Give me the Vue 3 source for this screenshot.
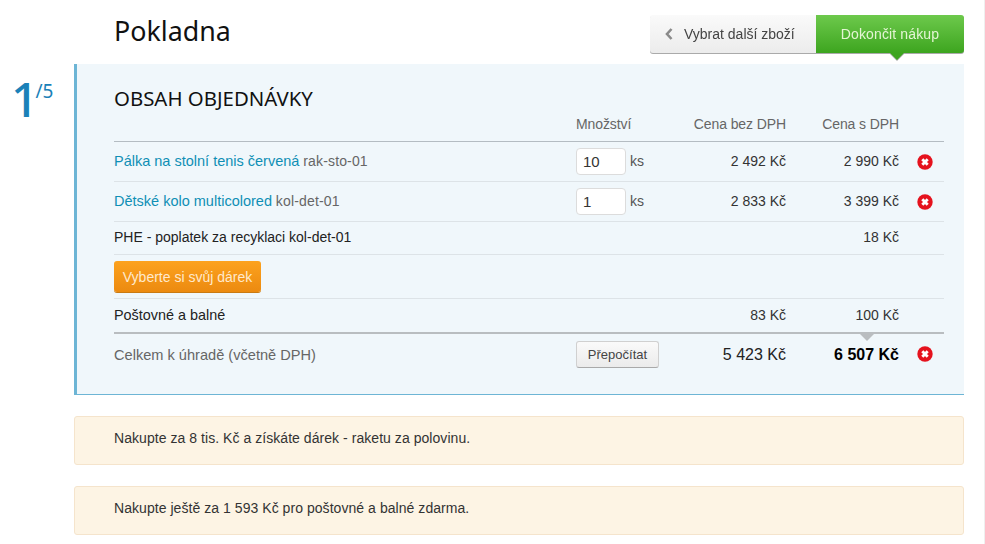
<script setup>
const items = [
  { name: 'Pálka na stolní tenis červená', code: 'rak-sto-01', qty: 10, net: '2 492 Kč', gross: '2 990 Kč' },
  { name: 'Dětské kolo multicolored', code: 'kol-det-01', qty: 1, net: '2 833 Kč', gross: '3 399 Kč' },
]
const notices = [
  'Nakupte za 8 tis. Kč a získáte dárek - raketu za polovinu.',
  'Nakupte ještě za 1 593 Kč pro poštovné a balné zdarma.',
]
</script>

<template>
  <div class="page">
    <header class="top">
      <h1 class="title">Pokladna</h1>
      <div class="actions">
        <a class="back">
          <svg class="chev" width="8" height="12" viewBox="0 0 8 12"><path d="M6.500 1 2 6l4.500 5" fill="none" stroke="#8a8a8a" stroke-width="2.600" /></svg>
          Vybrat další zboží
        </a>
        <a class="finish">Dokončit nákup</a>
      </div>
    </header>

    <section class="step">
      <div class="num"><span class="cur">1</span><span class="of">/5</span></div>
      <div class="panel">
        <h2 class="h2">OBSAH OBJEDNÁVKY</h2>
        <div class="row head">
          <div class="c-name"></div>
          <div class="c-qty">Množství</div>
          <div class="c-net">Cena bez DPH</div>
          <div class="c-gross">Cena s DPH</div>
          <div class="c-x"></div>
        </div>
        <div v-for="it in items" :key="it.code" class="row item">
          <div class="c-name"><a class="link">{{ it.name }}</a> <span class="code">{{ it.code }}</span></div>
          <div class="c-qty"><input class="qty" :value="it.qty" /><span class="ks">ks</span></div>
          <div class="c-net">{{ it.net }}</div>
          <div class="c-gross">{{ it.gross }}</div>
          <div class="c-x">
            <svg class="del" width="16" height="16" viewBox="0 0 16 16"><circle cx="8" cy="8" r="7.700" fill="#e5121d" /><path d="M5.300 5.300l5.400 5.400M10.700 5.300l-5.400 5.400" stroke="#fff" stroke-width="2.900" /></svg>
          </div>
        </div>
        <div class="row fee">
          <div class="c-name dark">PHE - poplatek za recyklaci kol-det-01</div>
          <div class="c-qty"></div>
          <div class="c-net"></div>
          <div class="c-gross">18 Kč</div>
          <div class="c-x"></div>
        </div>
        <div class="row gift"><button class="gift-btn">Vyberte si svůj dárek</button></div>
        <div class="row ship">
          <div class="c-name dark ship-label">Poštovné a balné</div>
          <div class="c-qty"></div>
          <div class="c-net">83 Kč</div>
          <div class="c-gross">100 Kč</div>
          <div class="c-x"></div>
        </div>
        <div class="row total">
          <div class="c-name label">Celkem k úhradě (včetně DPH)</div>
          <div class="c-qty"><button class="recalc">Přepočítat</button></div>
          <div class="c-net sum">5 423 Kč</div>
          <div class="c-gross sum strong">6 507 Kč</div>
          <div class="c-x">
            <svg class="del" width="16" height="16" viewBox="0 0 16 16"><circle cx="8" cy="8" r="7.700" fill="#e5121d" /><path d="M5.300 5.300l5.400 5.400M10.700 5.300l-5.400 5.400" stroke="#fff" stroke-width="2.900" /></svg>
          </div>
        </div>
      </div>
    </section>

    <p v-for="n in notices" :key="n" class="notice">{{ n }}</p>
  </div>
</template>

<style scoped>
.page {
  width: 985px;
  height: 544px;
  overflow: hidden;
  box-sizing: border-box;
  padding-right: 20px;
  font-family: "Liberation Sans", Arial, sans-serif;
  font-size: 14px;
  color: #333;
  background: #fff;
  border-right: 1px solid #efefef;
}
.top {
  display: flex;
  justify-content: space-between;
  padding: 15px 0 0 114px;
  height: 64px;
  box-sizing: border-box;
}
.title {
  margin: 0;
  font: 400 26.800px/32px "Noto Sans", sans-serif;
  color: #111;
}
.actions {
  display: flex;
  height: 38px;
  position: relative;
  filter: drop-shadow(0 1px 0 #aaa);
  font-size: 14px;
}
.back {
  width: 166px;
  box-sizing: border-box;
  padding-left: 15px;
  display: flex;
  align-items: center;
  gap: 11px;
  color: #444;
  border-radius: 3px 0 0 3px;
  background: linear-gradient(#fafafa, #ececec);
}
.finish {
  width: 148px;
  display: flex;
  align-items: center;
  justify-content: center;
  color: #e4f5d4;
  letter-spacing: 0.13px;
  border-radius: 0 3px 3px 0;
  background: linear-gradient(#6dc94c, #3da51f);
  position: relative;
}
.finish::after {
  content: "";
  position: absolute;
  left: 74px;
  top: 100%;
  border: 7px solid transparent;
  border-bottom-width: 0;
  border-top-color: #3da51f;
}
.step {
  display: flex;
}
.num {
  width: 74px;
  color: #1b81b8;
  font-family: "Noto Sans", sans-serif;
  padding: 0 0 0 11px;
  box-sizing: border-box;
  display: flex;
  align-items: flex-start;
}
.cur {
  font-size: 48px;
  font-weight: 500;
  line-height: 70px;
  letter-spacing: -4px;
}
.of {
  font-size: 19px;
  line-height: 28px;
  margin: 13px 0 0 1px;
}
.panel {
  width: 890px;
  height: 331px;
  flex: none;
  box-sizing: border-box;
  padding: 22px 20px 0 37px;
  background: #f0f7fb;
  border-left: 3px solid #6db5d5;
  border-bottom: 1px solid #6db5d5;
}
.h2 {
  margin: 0;
  font: 400 20.400px/24px "Noto Sans", sans-serif;
  color: #111;
  height: 28px;
}
.row {
  display: flex;
  align-items: center;
  border-bottom: 1px solid #dde3e7;
  box-sizing: border-box;
}
.c-name { width: 462px; }
.c-qty { width: 90px; display: flex; align-items: center; }
.c-net { width: 120px; text-align: right; }
.c-gross { width: 113px; text-align: right; }
.c-x { width: 45px; display: flex; justify-content: flex-end; padding-right: 11px; box-sizing: border-box; }
.head {
  height: 28px;
  color: #666;
  align-items: flex-start;
  padding-top: 2px;
  border-bottom-color: #b4bcc2;
  letter-spacing: -0.1px;
}
.item { height: 40px; }
.item .c-name, .item .c-net, .item .c-gross, .fee > div { padding-bottom: 2px; }
.ship > div { padding-bottom: 1px; }
.total .c-name, .total .c-net, .total .c-gross { padding-top: 2px; }
.link { color: #0f8fb5; font-size: 14.500px; }
.code { color: #666; letter-spacing: 0.15px; }
.qty {
  width: 50px;
  height: 27px;
  box-sizing: border-box;
  border: 1px solid #dcdcdc;
  border-radius: 4px;
  background: #fff;
  padding: 0 6px;
  font: 15px "Liberation Sans", Arial, sans-serif;
  color: #333;
  outline: 0;
  margin-right: 4px;
}
.ks { color: #555; position: relative; top: -1px; }
.fee { height: 33px; }
.dark { color: #222; }
.ship-label { font-size: 14.400px; }
.gift { height: 44px; }
.gift-btn {
  height: 31px;
  width: 147px;
  padding: 0;
  border: 0;
  border-radius: 3px;
  background: linear-gradient(#fca21e, #ec8a10);
  box-shadow: 0 1px 0 #c97a12;
  color: #ffe9cc;
  font: 14px "Liberation Sans", Arial, sans-serif;
}
.ship {
  height: 35px;
  border-bottom: 2px solid #b9bdc0;
}
.total {
  height: 40px;
  border-bottom: 0;
  position: relative;
}
.total::before {
  content: "";
  position: absolute;
  left: 746px;
  top: 0;
  border: 7px solid transparent;
  border-bottom-width: 0;
  border-top-color: #b9bdc0;
}
.label { color: #666; font-size: 14.600px; }
.recalc {
  width: 83px;
  height: 27px;
  padding: 0;
  border: 1px solid #d0d0d0;
  border-bottom-color: #a9a9a9;
  border-radius: 3px;
  background: linear-gradient(#fafafa, #ebebeb);
  color: #444;
  font: 13px "Liberation Sans", Arial, sans-serif;
}
.sum { font-size: 16px; color: #222; }
.strong { font-weight: 700; color: #000; }
.notice {
  margin: 21px 0 0 74px;
  height: 49px;
  box-sizing: border-box;
  padding: 0 0 0 39px;
  line-height: 42px;
  background: #fdf4e4;
  border: 1px solid #f5e4cc;
  border-radius: 3px;
  color: #333;
  letter-spacing: 0.05px;
  width: 890px;
}
</style>
